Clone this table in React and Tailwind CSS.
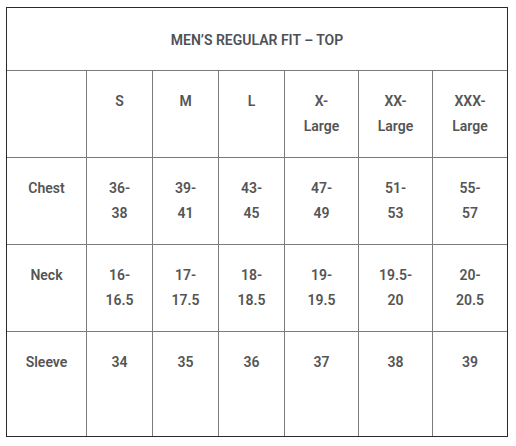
import React from "react";

const cols = ["w-[80px]", "w-[66px]", "w-[66px]", "w-[66px]", "w-[74px]", "w-[74px]", "w-[74px]"];

const rows = [
  { h: "h-[87px]", cells: ["", ["S"], ["M"], ["L"], ["X-", "Large"], ["XX-", "Large"], ["XXX-", "Large"]] },
  { h: "h-[87px]", cells: [["Chest"], ["36-", "38"], ["39-", "41"], ["43-", "45"], ["47-", "49"], ["51-", "53"], ["55-", "57"]] },
  { h: "h-[87px]", cells: [["Neck"], ["16-", "16.5"], ["17-", "17.5"], ["18-", "18.5"], ["19-", "19.5"], ["19.5-", "20"], ["20-", "20.5"]] },
  { h: "h-[104px]", cells: [["Sleeve"], ["34"], ["35"], ["36"], ["37"], ["38"], ["39"]], last: true },
];

export default function App() {
  return (
    <div className="w-[516px] h-[446px] bg-white pl-[6px] pt-[7px]" style={{ fontFamily: "Roboto, 'Liberation Sans', sans-serif" }}>
      <div className="w-[502px] h-[430px] border border-[#2a2a2a] flex flex-col text-[14px] leading-[25px] font-semibold text-[#555555]">
        <div className="h-[63px] border-b border-[#7a7a7a] flex justify-center pt-[20px] text-[#4d5157]">
          MEN’S REGULAR FIT – TOP
        </div>
        {rows.map((r, ri) => (
          <div key={ri} className={`flex ${r.h} ${r.last ? "" : "border-b border-[#7a7a7a]"}`}>
            {r.cells.map((c, ci) => (
              <div
                key={ci}
                className={`${cols[ci]} ${ci < 6 ? "border-r border-[#7a7a7a]" : ""} flex flex-col items-center pt-[18px] text-center`}
              >
                {Array.isArray(c) && c.map((t, ti) => <span key={ti}>{t}</span>)}
              </div>
            ))}
          </div>
        ))}
      </div>
    </div>
  );
}
